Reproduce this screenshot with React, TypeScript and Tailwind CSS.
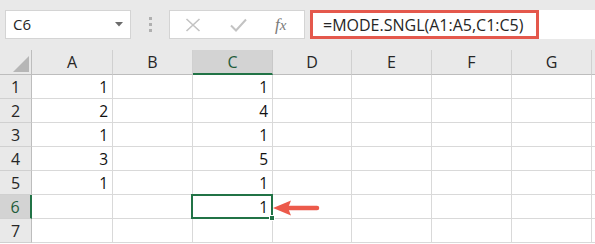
const columns = ["A", "B", "C", "D", "E", "F", "G", ""];

const data: Record<number, Record<string, string>> = {
  1: { A: "1", C: "1" },
  2: { A: "2", C: "4" },
  3: { A: "1", C: "1" },
  4: { A: "3", C: "5" },
  5: { A: "1", C: "1" },
  6: { C: "1" },
  7: {},
};

const rows = [1, 2, 3, 4, 5, 6, 7];

function NameBox() {
  return (
    <div className="w-[126px] h-[29px] bg-white border border-[#d4d4d4] flex items-center justify-between pl-[7px] pr-[7px]">
      <span className="text-[15px] text-[#262626]">C6</span>
      <svg width="8" height="5" viewBox="0 0 8 5">
        <path d="M0 0 L8 0 L4 4.5 Z" fill="#6b6b6b" />
      </svg>
    </div>
  );
}

function FormulaIcons() {
  return (
    <div className="w-[136px] h-[29px] bg-white border border-[#d4d4d4] flex items-center">
      <svg className="ml-[15px]" width="16" height="14" viewBox="0 0 16 14">
        <path d="M1.5 1 L14.5 13 M14.5 1 L1.5 13" stroke="#c3c3c3" strokeWidth="1.6" />
      </svg>
      <svg className="ml-[29px]" width="17" height="14" viewBox="0 0 17 14">
        <path d="M1 7.5 L6 12.5 L16 1.5" stroke="#c3c3c3" strokeWidth="2" fill="none" />
      </svg>
      <span className="ml-[28px] text-[17px] italic text-[#7a7a7a] font-['Liberation_Serif',serif] leading-none">
        f<span className="text-[15px]">x</span>
      </span>
    </div>
  );
}

function Toolbar() {
  return (
    <div className="h-[50px] bg-[#e9e9e9] flex items-start pt-[10px] pl-[5px]">
      <NameBox />
      <div className="w-[38px] h-[29px] flex flex-col items-center justify-center gap-[3px]">
        <div className="w-[3px] h-[3px] bg-[#b0b0b0]" />
        <div className="w-[3px] h-[3px] bg-[#b0b0b0]" />
        <div className="w-[3px] h-[3px] bg-[#b0b0b0]" />
      </div>
      <FormulaIcons />
      <div className="ml-[5px] flex-1 h-[29px] bg-white flex">
        <div className="w-[229px] h-full border-[3px] border-[#e4584c] flex items-center pl-[10px]">
          <span className="text-[16px] text-[#262626] whitespace-nowrap">=MODE.SNGL(A1:A5,C1:C5)</span>
        </div>
      </div>
    </div>
  );
}

function Corner() {
  return (
    <div className="h-[25px] bg-[#e9e9e9] border-r border-b border-[#bdbdbd] flex items-end justify-end pr-[2px] pb-[2px]">
      <svg width="16" height="16" viewBox="0 0 16 16">
        <path d="M16 0 L16 16 L0 16 Z" fill="#b6b6b6" />
      </svg>
    </div>
  );
}

function ColumnHeader({ name }: { name: string }) {
  const active = name === "C";
  return (
    <div
      className={`h-[25px] flex items-center justify-center text-[16px] border-r ${
        active
          ? "bg-[#d3d3d3] text-[#1f5c3a] border-b-2 border-b-[#217346] border-r-[#c8c8c8]"
          : "bg-[#e9e9e9] text-[#262626] border-b border-b-[#bdbdbd] border-r-[#d0d0d0]"
      }`}
    >
      {name}
    </div>
  );
}

function RowHeader({ n }: { n: number }) {
  const active = n === 6;
  return (
    <div
      className={`h-[24px] flex items-center justify-center text-[16px] border-b border-b-[#d0d0d0] ${
        active
          ? "bg-[#d3d3d3] text-[#1f5c3a] border-r-2 border-r-[#217346]"
          : "bg-[#e9e9e9] text-[#262626] border-r border-r-[#bdbdbd]"
      }`}
    >
      {n}
    </div>
  );
}

function Arrow() {
  return (
    <svg className="absolute left-[78px] top-[4px] z-30" width="50" height="18" viewBox="0 0 50 18">
      <path d="M2 9 L20 1.5 L17 9 L20 16.5 Z" fill="#ec5a4b" />
      <path d="M16 9 L46 9" stroke="#ec5a4b" strokeWidth="4.5" strokeLinecap="round" />
    </svg>
  );
}

function Cell({ row, col }: { row: number; col: string }) {
  const value = data[row][col];
  const selected = row === 6 && col === "C";
  return (
    <div
      className={`relative h-[24px] bg-white border-r border-b border-[#d9d9d9] flex items-center justify-end pr-[4px] pt-[2px] text-[15.5px] text-[#111] ${
        selected ? "z-10" : ""
      }`}
    >
      {value}
      {selected && (
        <>
          <div className="absolute -left-[2px] -top-[1px] -right-[1px] -bottom-[1px] border-2 border-[#217346] z-10" />
          <div className="absolute -right-[3px] -bottom-[3px] w-[6px] h-[6px] bg-[#217346] border border-white z-20" />
          <Arrow />
        </>
      )}
    </div>
  );
}

export default function App() {
  return (
    <div className="w-[595px] h-[244px] overflow-hidden bg-white font-['Open_Sans','Noto_Sans',sans-serif]">
      <Toolbar />
      <div className="grid grid-cols-[32px_81px_80px_80px_79px_80px_80px_80px_1fr]">
        <Corner />
        {columns.map((c, i) => (
          <ColumnHeader key={i} name={c} />
        ))}
        {rows.map((r) => (
          <div key={r} className="contents">
            <RowHeader n={r} />
            {columns.map((c, i) => (
              <Cell key={i} row={r} col={c} />
            ))}
          </div>
        ))}
      </div>
    </div>
  );
}
